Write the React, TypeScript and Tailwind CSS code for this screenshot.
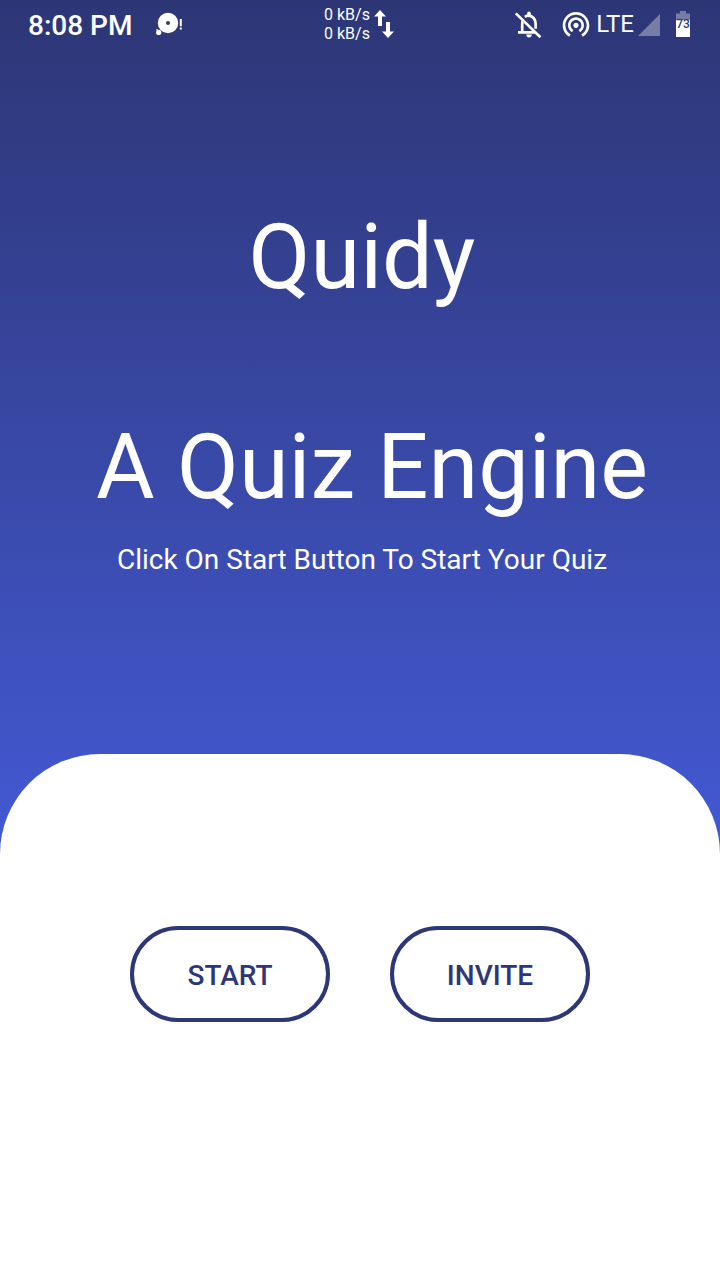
import type { ReactNode } from "react";
import { MdWifiTethering } from "react-icons/md";

function ChatBubbleIcon() {
  return (
    <svg width="28" height="24" viewBox="0 0 28 24" fill="currentColor" aria-hidden="true">
      <path
        fillRule="evenodd"
        d="M12 .8a10.2 10.2 0 1 1 0 20.4A10.2 10.2 0 0 1 12 .8Zm0 8.2a2 2 0 1 0 0 4 2 2 0 0 0 0-4Z"
      />
      <circle cx="2.7" cy="20.4" r="2.6" />
      <circle cx="1" cy="17.8" r="0.8" />
      <path d="M23.8 7h2v7.2h-2zM23.8 15.4h2v2h-2z" />
    </svg>
  );
}

function TransferIcon() {
  return (
    <svg width="20" height="28" viewBox="0 0 20 28" fill="currentColor" aria-hidden="true">
      <path d="M6 0 12 6.5H8V16H4V6.5H0ZM12 12h4v9.5h4L14 28 8 21.5h4Z" />
    </svg>
  );
}

function BellOffIcon() {
  return (
    <svg width="28" height="28" viewBox="0 0 28 28" fill="none" stroke="currentColor" strokeWidth="2.7" aria-hidden="true">
      <path d="M1.8 3.4 26.4 27.2" />
      <path d="M8.7 10.5C8.3 12 8.2 13 8.2 14.5v7.8M4 22.3h18" />
      <path d="M10.8 6.8C15.5 4 21.6 7 21.6 14v4.8" />
      <path d="M15 3.4v2" strokeWidth="3.6" strokeLinecap="round" />
      <path d="M12.2 24.6h5.6a2.8 2.8 0 0 1-5.6 0Z" fill="currentColor" stroke="none" />
    </svg>
  );
}

function SignalIcon() {
  return (
    <svg width="22" height="24" viewBox="0 0 22 24" fill="currentColor" className="opacity-35" aria-hidden="true">
      <path d="M22 2v22H0Z" />
    </svg>
  );
}

function Battery({ level }: { level: number }) {
  return (
    <div className="relative h-[26px] w-[14px]">
      <svg width="14" height="26" viewBox="0 0 14 26" fill="currentColor" aria-hidden="true">
        <path d="M4 0h6v2.6h4V9H0V2.6h4Z" opacity="0.35" />
        <path d="M0 9h14v17H0Z" />
      </svg>
      <span className="absolute inset-0 flex items-center justify-center text-xs font-medium text-[#2e3777]">
        {level}
      </span>
    </div>
  );
}

function OutlineButton({ children }: { children: ReactNode }) {
  return (
    <button
      type="button"
      className="h-24 w-[200px] rounded-full border-4 border-[#2d3776] pt-1 text-[28px] leading-8 font-medium text-[#2d3776]"
    >
      {children}
    </button>
  );
}

export default function App() {
  return (
    <div className="flex min-h-screen flex-col bg-white font-[Roboto,sans-serif]">
      <div className="bg-linear-to-b from-[#2d3675] to-[#4359d4] text-white">
        <header className="grid h-12 grid-cols-[1fr_auto_1fr] items-center pr-[30px] pl-7">
          <div className="flex items-center gap-6">
            <time className="pt-1 text-[28px] leading-8 font-medium">8:08 PM</time>
            <ChatBubbleIcon />
          </div>
          <div className="flex items-center gap-1">
            <div className="text-base leading-[19px]">
              <p>0 kB/s</p>
              <p>0 kB/s</p>
            </div>
            <TransferIcon />
          </div>
          <div className="flex items-center justify-end">
            <BellOffIcon />
            <MdWifiTethering className="ml-[18px]" size={32} aria-hidden="true" />
            <span className="mx-1 text-2xl">LTE</span>
            <SignalIcon />
            <span className="ml-4">
              <Battery level={73} />
            </span>
          </div>
        </header>
        <main className="flex flex-col items-center pt-[157px] pb-[278px] pl-1 text-center">
          <h1 className="text-[90px] leading-[105px]">Quidy</h1>
          <h2 className="mt-[105px] pl-5 text-[90px] leading-[105px]">A Quiz Engine</h2>
          <p className="mt-[23px] text-[28px] leading-[33px]">Click On Start Button To Start Your Quiz</p>
        </main>
      </div>
      <section className="-mt-[100px] flex grow flex-wrap content-start justify-center gap-[60px] rounded-t-[100px] bg-white pt-[172px]">
        <OutlineButton>START</OutlineButton>
        <OutlineButton>INVITE</OutlineButton>
      </section>
    </div>
  );
}
